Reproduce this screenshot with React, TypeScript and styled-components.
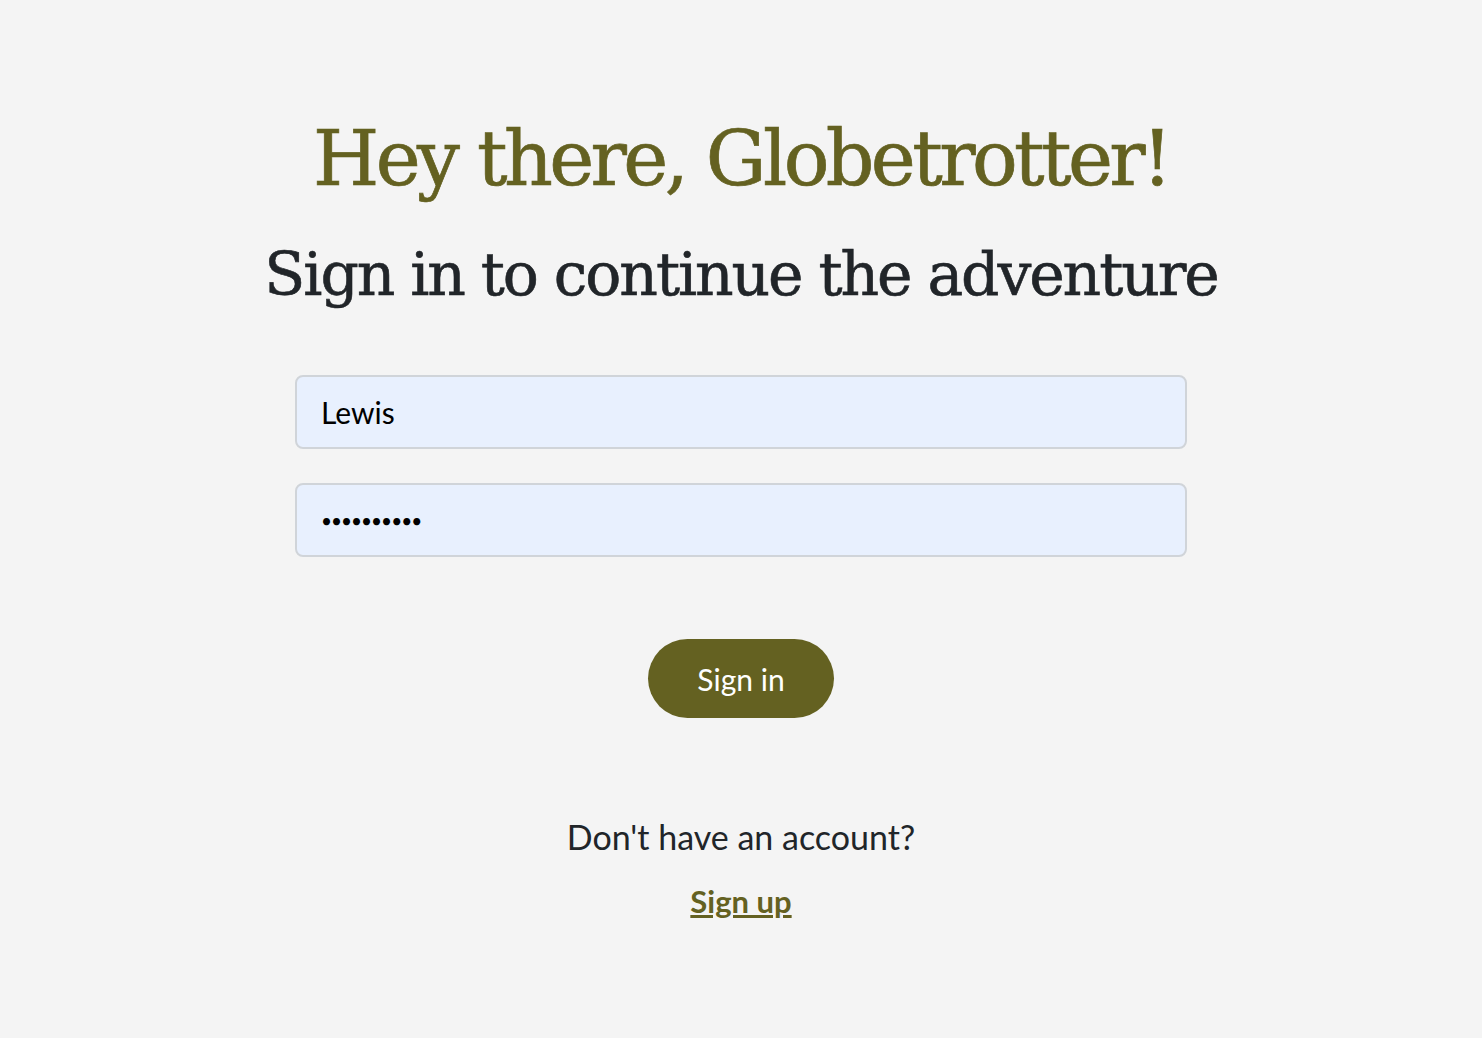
import React from "react";
import styled, { createGlobalStyle } from "styled-components";

const Global = createGlobalStyle`
  html, body { margin: 0; padding: 0; background: #f4f4f4; }
  body { font-family: "Lato", "Open Sans", sans-serif; color: #212529; }
  * { box-sizing: border-box; }
`;

const Page = styled.main`
  min-height: 1038px;
  display: flex;
  flex-direction: column;
  align-items: center;
  padding-top: 111px;
`;

const Title = styled.h1`
  margin: 0;
  font-family: "DejaVu Serif", "Liberation Serif", serif;
  font-weight: 400;
  font-size: 76px;
  line-height: 96px;
  letter-spacing: -3.6px;
  color: #646121;
  -webkit-text-stroke: 0.7px #646121;
`;

const Subtitle = styled.h2`
  margin: 29px 0 0;
  font-family: "DejaVu Serif", "Liberation Serif", serif;
  font-weight: 400;
  font-size: 60px;
  line-height: 76px;
  letter-spacing: -2.1px;
  color: #212529;
  -webkit-text-stroke: 0.6px #212529;
`;

const Form = styled.form`
  margin-top: 63px;
  width: 892px;
  display: flex;
  flex-direction: column;
  align-items: center;
  gap: 34px;
`;

const Input = styled.input<{ $secret?: boolean }>`
  width: 100%;
  height: 74px;
  padding: 0 24px;
  border: 2px solid #d0d4d9;
  border-radius: 8px;
  background: #e8f0fe;
  font-family: "Lato", "Open Sans", sans-serif;
  font-size: ${(p) => (p.$secret ? "19px" : "30px")};
  letter-spacing: ${(p) => (p.$secret ? "-1px" : "0")};
  color: #000;
  outline: none;
`;

const Button = styled.button`
  margin-top: 48px;
  width: 186px;
  height: 79px;
  border: none;
  border-radius: 40px;
  background: #646121;
  color: #fff;
  font-family: "Lato", "Open Sans", sans-serif;
  font-size: 30px;
  cursor: pointer;
`;

const Prompt = styled.p`
  margin: 99px 0 0;
  font-size: 34px;
  line-height: 40px;
  color: #212529;
`;

const SignUp = styled.a`
  margin-top: 24px;
  font-size: 31px;
  line-height: 40px;
  font-weight: 700;
  color: #646121;
  text-decoration: underline;
`;

export default function App() {
  return (
    <>
      <Global />
      <Page>
        <Title>Hey there, Globetrotter!</Title>
        <Subtitle>Sign in to continue the adventure</Subtitle>
        <Form onSubmit={(e) => e.preventDefault()}>
          <Input type="text" defaultValue="Lewis" />
          <Input $secret type="password" defaultValue="••••••••••" />
          <Button type="submit">Sign in</Button>
        </Form>
        <Prompt>Don't have an account?</Prompt>
        <SignUp href="#">Sign up</SignUp>
      </Page>
    </>
  );
}
